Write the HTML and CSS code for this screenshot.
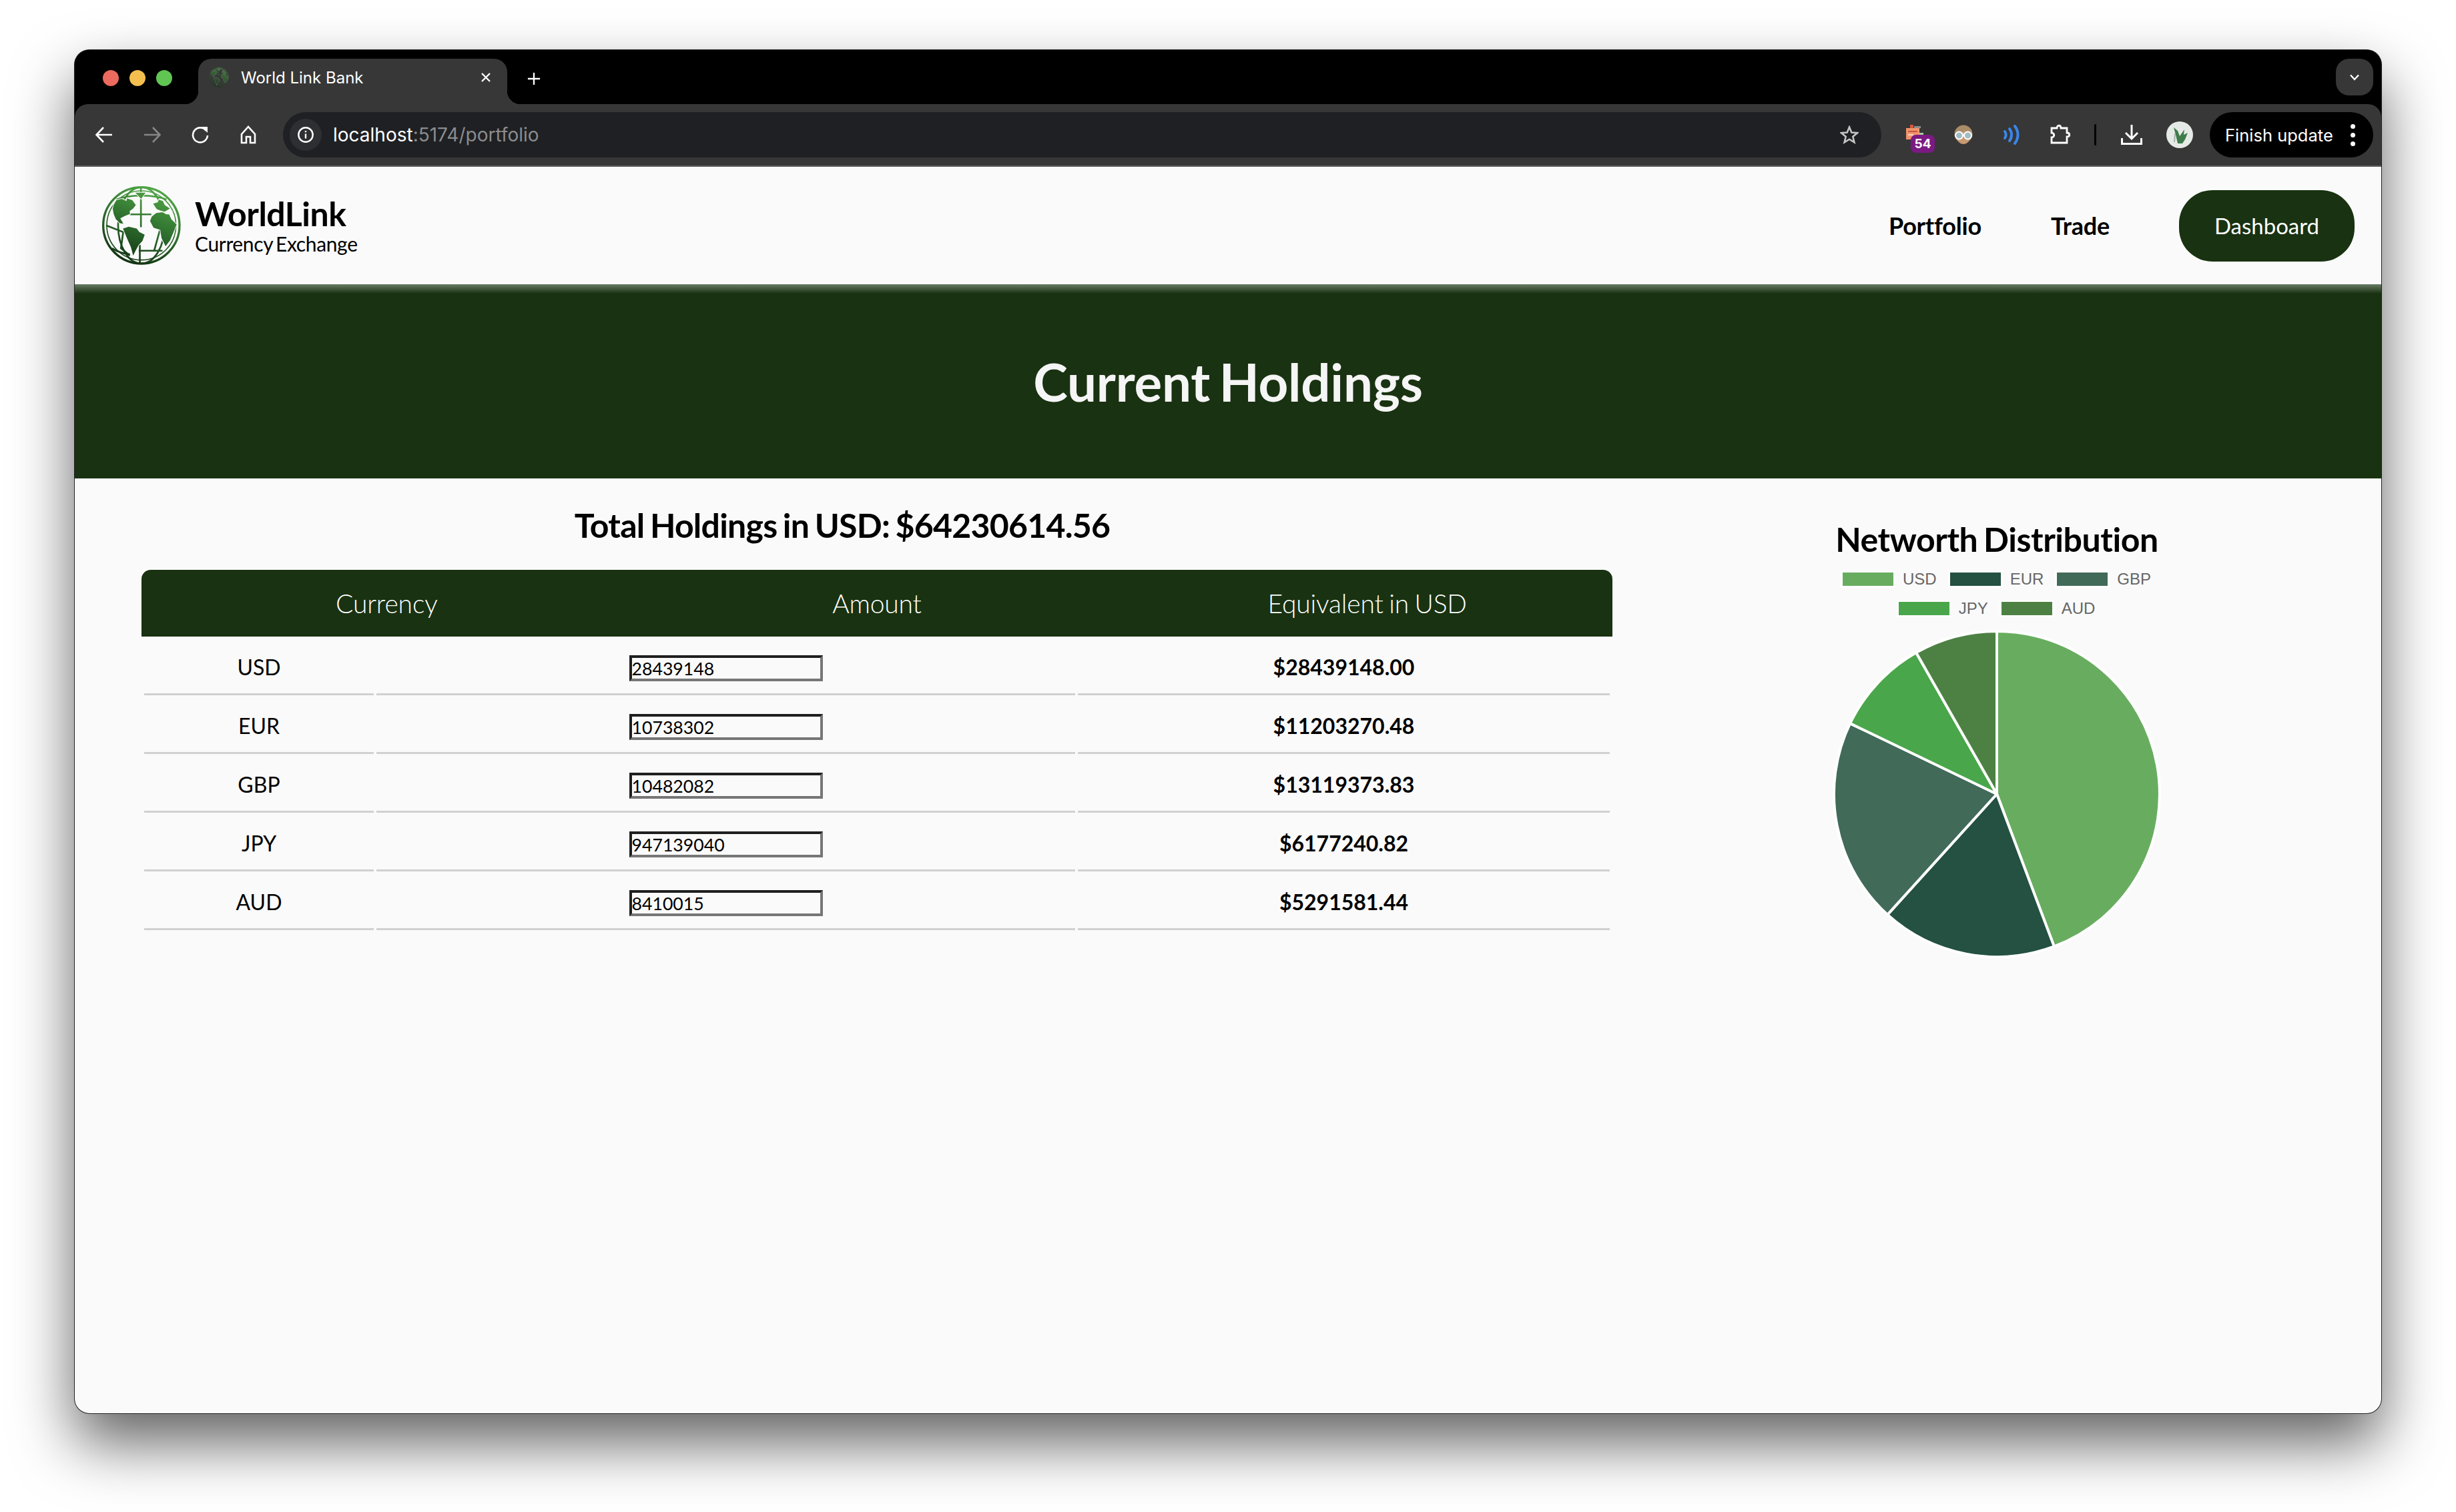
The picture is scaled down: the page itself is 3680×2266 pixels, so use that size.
FILE: index.html
```html
<!DOCTYPE html>
<html lang="en">
<head>
  <meta charset="UTF-8" />
  <title>World Link Bank</title>
  <link rel="stylesheet" href="styles.css">
</head>
<body>

  <svg class="defs" width="0" height="0">
    <defs>
      <linearGradient id="globe-fill" gradientUnits="userSpaceOnUse" x1="300" y1="70" x2="170" y2="400">
        <stop offset="0" stop-color="#52a848" />
        <stop offset="0.55" stop-color="#2b6a2c" />
        <stop offset="1" stop-color="#123412" />
      </linearGradient>
      <symbol id="globe" viewBox="40 55 355 355">
        <g fill="none" stroke="url(#globe-fill)" stroke-width="8">
          <circle cx="217" cy="232" r="172" stroke-width="10" />
          <circle cx="217" cy="232" r="156" stroke-width="5" />
          <ellipse cx="217" cy="232" rx="105" ry="172" />
          <path d="M215 60V240M210 320V404" />
          <path d="M165 182H262" />
          <path d="M205 346H312" />
          <path d="M58 232L135 262L125 335L165 368" />
          <path d="M300 255L275 345" />
          <path d="M105 115C160 92 275 92 330 115" />
          <path d="M85 335C110 352 130 358 165 362" />
        </g>
        <g fill="url(#globe-fill)" stroke="#fafafa" stroke-width="6" paint-order="stroke">
          <path d="M92 140L104 118L128 112L150 122L152 110L176 118L192 140L180 156L164 168L166 180L142 190L122 200L136 224L120 222L102 204L92 180L88 158Z" />
          <path d="M134 246L160 238L196 246L208 262L232 274L222 302L204 322L192 344L180 368L170 330L152 290Z" />
          <path d="M256 212L264 192L284 176L312 172L330 182L342 182L352 204L376 228L362 262L346 300L326 326L308 290L302 252L272 242Z" />
          <path d="M270 134L290 128L296 116L314 122L322 140L346 156L322 170L300 164L286 158Z" />
          <path d="M190 84H236L216 112Z" />
        </g>
      </symbol>
    </defs>
  </svg>

  <div class="window">

    <div class="tabstrip">
      <div class="lights">
        <span class="light red"></span>
        <span class="light yellow"></span>
        <span class="light green"></span>
      </div>
      <div class="tab">
        <svg class="favicon"><use href="#globe" /></svg>
        <span class="tab-title">World Link Bank</span>
        <svg class="tab-close" viewBox="0 0 16 16"><path d="M2 2L14 14M14 2L2 14" /></svg>
      </div>
      <svg class="new-tab" viewBox="0 0 22 22"><path d="M11 1V21M1 11H21" /></svg>
      <div class="tab-search">
        <svg viewBox="0 0 16 10"><path d="M2 1.500L8 8L14 1.500" /></svg>
      </div>
    </div>

    <div class="toolbar">
      <div class="tool">
        <svg class="icon" viewBox="0 0 28 28"><path d="M26 14H3M13 3L2.500 14L13 25" /></svg>
      </div>
      <div class="tool dim">
        <svg class="icon" viewBox="0 0 28 28"><path d="M2 14H25M15 3L25.500 14L15 25" /></svg>
      </div>
      <div class="tool">
        <svg class="icon" viewBox="0 0 28 28"><path d="M23 8A11 11 0 1 0 25 15" /><path class="solid" d="M16 2L25 2V11Z" /></svg>
      </div>
      <div class="tool">
        <svg class="icon" viewBox="0 0 28 28"><path d="M4 13L14 2L24 13V26H17V17H11V26H4Z" /></svg>
      </div>

      <div class="address">
        <div class="site-info">
          <svg class="icon" viewBox="0 0 28 28"><circle cx="14" cy="14" r="11.500" /><path d="M14 12.500V20" /><path d="M14 7.500V10" /></svg>
        </div>
        <span class="url">localhost<span class="url-rest">:5174/portfolio</span></span>
        <svg class="icon star" viewBox="0 0 28 28"><path d="M14 2.500L17.300 10.600L26 11.200L19.300 16.800L21.400 25.300L14 20.700L6.600 25.300L8.700 16.800L2 11.200L10.700 10.600Z" /></svg>
      </div>

      <div class="tool ext">
        <svg class="ext-tabs" viewBox="0 0 26 26">
          <rect x="6" y="0" width="5" height="5" fill="#d9583a" />
          <rect x="12" y="2" width="10" height="3" fill="#8d8d8d" />
          <rect x="0" y="5" width="20" height="17" fill="#f0936c" />
          <rect x="3" y="9" width="14" height="2" fill="#c9573a" />
          <rect x="3" y="14" width="8" height="2" fill="#fbd3bf" />
          <rect x="20" y="12" width="6" height="3" fill="#a7c9a0" />
          <rect x="20" y="17" width="6" height="3" fill="#8d8d8d" />
        </svg>
        <span class="ext-badge">54</span>
      </div>
      <div class="tool">
        <svg class="ext-face" viewBox="0 0 30 30">
          <circle cx="15" cy="14" r="13.500" fill="#a98c68" />
          <path d="M5 17C5 25 10 29 15 29C20 29 25 25 25 17C20 14 17 11 16 8C14 12 10 15 5 17Z" fill="#c79a72" />
          <circle cx="8.500" cy="16" r="5.500" fill="#9fbdc4" stroke="#fff" stroke-width="2" />
          <circle cx="21.500" cy="16" r="5.500" fill="#9fbdc4" stroke="#fff" stroke-width="2" />
        </svg>
      </div>
      <div class="tool">
        <svg class="ext-wave" viewBox="0 0 26 30">
          <path d="M3 10C5 13 5 17 3 20" />
          <path d="M10 6C14 11 14 19 10 24" />
          <path d="M18 2C24 10 24 20 18 28" />
        </svg>
      </div>
      <div class="tool">
        <svg class="puzzle" viewBox="0 0 32 32"><path d="M3 6H11C11 1 17 1 17 6H26V13C31 13 31 19 26 19V28H3V20C8 20 8 13 3 13Z" /></svg>
      </div>
      <span class="tool-divider"></span>
      <div class="tool">
        <svg class="download" viewBox="0 0 32 32"><path d="M16 1V21M7 13L16 22L25 13" /><path d="M1.500 21V29.500H30.500V21" /></svg>
      </div>
      <div class="tool">
        <svg class="avatar" viewBox="0 0 40 40">
          <circle cx="20" cy="20" r="20" fill="#e6eae6" />
          <path d="M11 9L17 14L20 22L27 12L26 20L32 17L28 27L24 33L17 33L14 20Z" fill="#3f7c4a" />
          <path d="M13 18L12 31" stroke="#a9b3a9" stroke-width="2" fill="none" />
        </svg>
      </div>
      <div class="update-pill">
        <span>Finish update</span>
        <span class="dots"><i></i><i></i><i></i></span>
      </div>
    </div>

    <div class="page">
      <header class="site-header">
        <div class="brand">
          <svg class="logo"><use href="#globe" /></svg>
          <div>
            <div class="brand-name">WorldLink</div>
            <div class="brand-sub">Currency Exchange</div>
          </div>
        </div>
        <nav class="site-nav">
          <a>Portfolio</a>
          <a>Trade</a>
          <a class="nav-button">Dashboard</a>
        </nav>
      </header>

      <section class="hero">
        <h1>Current Holdings</h1>
      </section>

      <main class="content">
        <section class="holdings">
          <h2>Total Holdings in USD: $64230614.56</h2>
          <div class="table-head">
            <span>Currency</span>
            <span>Amount</span>
            <span>Equivalent in USD</span>
          </div>
          <table class="holdings-table">
            <colgroup>
              <col class="col-currency">
              <col class="col-amount">
              <col class="col-usd">
            </colgroup>
            <tbody>
              <tr>
                <td>USD</td>
                <td><input class="amount" type="text" value="28439148"></td>
                <td class="usd">$28439148.00</td>
              </tr>
              <tr>
                <td>EUR</td>
                <td><input class="amount" type="text" value="10738302"></td>
                <td class="usd">$11203270.48</td>
              </tr>
              <tr>
                <td>GBP</td>
                <td><input class="amount" type="text" value="10482082"></td>
                <td class="usd">$13119373.83</td>
              </tr>
              <tr>
                <td>JPY</td>
                <td><input class="amount" type="text" value="947139040"></td>
                <td class="usd">$6177240.82</td>
              </tr>
              <tr>
                <td>AUD</td>
                <td><input class="amount" type="text" value="8410015"></td>
                <td class="usd">$5291581.44</td>
              </tr>
            </tbody>
          </table>
        </section>

        <aside class="networth">
          <h3>Networth Distribution</h3>
          <div class="legend">
            <div class="legend-row">
              <span class="legend-item"><i class="swatch c-usd"></i>USD</span>
              <span class="legend-item"><i class="swatch c-eur"></i>EUR</span>
              <span class="legend-item"><i class="swatch c-gbp"></i>GBP</span>
            </div>
            <div class="legend-row">
              <span class="legend-item"><i class="swatch c-jpy"></i>JPY</span>
              <span class="legend-item"><i class="swatch c-aud"></i>AUD</span>
            </div>
          </div>
          <svg class="pie" viewBox="0 0 488 488">
            <path class="f-usd" d="M244 244L244 0A244 244 0 0 1 329.800 472.400Z" />
            <path class="f-eur" d="M244 244L329.800 472.400A244 244 0 0 1 80.100 424.800Z" />
            <path class="f-gbp" d="M244 244L80.100 424.800A244 244 0 0 1 24.100 138.100Z" />
            <path class="f-jpy" d="M244 244L24.100 138.100A244 244 0 0 1 123.100 32.100Z" />
            <path class="f-aud" d="M244 244L123.100 32.100A244 244 0 0 1 244 0Z" />
          </svg>
        </aside>
      </main>
    </div>
  </div>

</body>
</html>
```

FILE: styles.css
```css
/* Desktop behind the browser window */
html, body {
  margin: 0;
  height: 100%;
}

body {
  background: #fff;
  padding: 75px 112px 148px;
  box-sizing: border-box;
  font-family: Lato, "Open Sans", sans-serif;
  overflow: hidden;
}

.defs {
  position: absolute;
}

.window {
  height: 100%;
  display: flex;
  flex-direction: column;
  background: #000;
  border-radius: 22px;
  overflow: hidden;
  box-shadow: 0 0 0 1px #222, 0 44px 90px rgba(0, 0, 0, 0.62);
}

/* Browser tab strip */
.tabstrip {
  height: 81px;
  flex: none;
  display: flex;
  align-items: flex-end;
  background: #000;
}

.lights {
  display: flex;
  gap: 16px;
  margin: 0 39px 27px 42px;
}

.light {
  width: 24px;
  height: 24px;
  border-radius: 50%;
}

.red { background: #ec6a5e; }
.yellow { background: #f4bf4f; }
.green { background: #61c554; }

.tab {
  position: relative;
  width: 463px;
  height: 68px;
  box-sizing: border-box;
  padding: 0 24px 12px 16px;
  display: flex;
  align-items: center;
  background: #373737;
  border-radius: 20px 20px 0 0;
  color: #fff;
  font-family: Inter, sans-serif;
  font-size: 24px;
}

.tab::before,
.tab::after {
  content: "";
  position: absolute;
  bottom: 0;
  width: 20px;
  height: 20px;
}

.tab::before {
  left: -20px;
  background: radial-gradient(circle at 0 0, #000 20px, #373737 20.5px);
}

.tab::after {
  right: -20px;
  background: radial-gradient(circle at 100% 0, #000 20px, #373737 20.5px);
}

.favicon {
  width: 30px;
  height: 32px;
  margin-right: 18px;
  opacity: 0.6;
}

.tab-title {
  flex: 1;
}

.tab-close {
  width: 16px;
  height: 16px;
  fill: none;
  stroke: #fff;
  stroke-width: 2.4;
}

.new-tab {
  width: 20px;
  height: 20px;
  margin: 0 0 28px 30px;
  fill: none;
  stroke: #fff;
  stroke-width: 2.6;
}

.tab-search {
  width: 56px;
  height: 55px;
  margin: 0 12px 13px auto;
  display: flex;
  align-items: center;
  justify-content: center;
  background: #373737;
  border-radius: 20px;
}

.tab-search svg {
  width: 16px;
  height: 10px;
  fill: none;
  stroke: #fff;
  stroke-width: 2.4;
}

/* Browser toolbar */
.toolbar {
  height: 94px;
  flex: none;
  box-sizing: border-box;
  padding: 0 12px 0 8px;
  display: flex;
  align-items: center;
  background: #373737;
  border-bottom: 2px solid #5f5f5f;
  border-radius: 20px 20px 0 0;
}

.tool {
  position: relative;
  width: 72px;
  height: 72px;
  flex: none;
  display: flex;
  align-items: center;
  justify-content: center;
}

.icon {
  width: 28px;
  height: 28px;
  fill: none;
  stroke: #fff;
  stroke-width: 2.6;
}

.icon .solid {
  fill: #fff;
  stroke: none;
}

.dim .icon {
  stroke: #868686;
}

.address {
  flex: 1;
  height: 68px;
  margin: 0 13px 0 16px;
  padding: 0 34px 0 10px;
  display: flex;
  align-items: center;
  background: #1f2023;
  border-radius: 34px;
}

.site-info {
  width: 48px;
  height: 48px;
  margin-right: 17px;
  display: flex;
  align-items: center;
  justify-content: center;
  background: #2e2f32;
  border-radius: 50%;
}

.site-info .icon {
  width: 26px;
  height: 26px;
}

.url {
  flex: 1;
  color: #fff;
  font-family: Inter, sans-serif;
  font-size: 28px;
}

.url-rest {
  color: #8b8c8e;
}

.star {
  stroke: #c4c4c4;
}

.ext-tabs {
  position: absolute;
  left: 24px;
  top: 21px;
  width: 26px;
  height: 26px;
}

.ext-badge {
  position: absolute;
  left: 31px;
  top: 36px;
  width: 36px;
  height: 27px;
  display: flex;
  align-items: center;
  justify-content: center;
  background: #7b1a82;
  border-radius: 8px;
  color: #fff;
  font-family: Inter, sans-serif;
  font-size: 19px;
  font-weight: 700;
}

.ext-face {
  width: 30px;
  height: 30px;
  margin-left: 4px;
}

.ext-wave {
  width: 26px;
  height: 30px;
  margin-left: 4px;
  fill: none;
  stroke: #3a86ea;
  stroke-width: 4;
  stroke-linecap: round;
}

.puzzle {
  width: 32px;
  height: 32px;
  margin-left: 6px;
  fill: none;
  stroke: #fff;
  stroke-width: 2.8;
}

.download {
  width: 32px;
  height: 32px;
  fill: none;
  stroke: #fff;
  stroke-width: 3;
}

.tool-divider {
  width: 3px;
  height: 32px;
  margin: 0 17px 0 18px;
  flex: none;
  background: #000;
  border-radius: 2px;
}

.avatar {
  width: 40px;
  height: 40px;
}

.update-pill {
  width: 245px;
  height: 68px;
  margin-left: 9px;
  box-sizing: border-box;
  padding: 0 27px 0 23px;
  display: flex;
  align-items: center;
  justify-content: space-between;
  flex: none;
  background: #000;
  border-radius: 34px;
  color: #fff;
  font-family: Inter, sans-serif;
  font-size: 25.5px;
}

.dots {
  display: flex;
  flex-direction: column;
  gap: 6px;
}

.dots i {
  width: 7px;
  height: 7px;
  background: #fff;
  border-radius: 50%;
}

/* The page itself */
.page {
  flex: 1;
  display: flex;
  flex-direction: column;
  background: #fafafa;
}

.site-header {
  height: 176px;
  flex: none;
  box-sizing: border-box;
  padding: 0 40px 0 41px;
  display: flex;
  align-items: center;
  justify-content: space-between;
}

.brand {
  display: flex;
  align-items: center;
  gap: 21px;
}

.logo {
  width: 118px;
  height: 118px;
}

.brand-name {
  font-size: 50px;
  font-weight: 700;
  line-height: 54px;
  letter-spacing: -0.5px;
  color: #000;
}

.brand-sub {
  font-size: 30px;
  line-height: 36px;
  letter-spacing: -0.35px;
  word-spacing: -3px;
  color: #000;
}

.site-nav {
  display: flex;
  align-items: center;
  gap: 104px;
}

.site-nav a {
  font-size: 36px;
  font-weight: 700;
  letter-spacing: -0.2px;
  color: #000;
}

.site-nav .nav-button {
  width: 263px;
  height: 107px;
  display: flex;
  align-items: center;
  justify-content: center;
  background: #193211;
  border-radius: 50px;
  color: #fff;
  font-weight: 400;
  font-size: 33px;
  letter-spacing: 0;
}

.hero {
  height: 291px;
  flex: none;
  display: flex;
  justify-content: center;
  align-items: center;
  background: linear-gradient(#6a7b66 0, #193211 14px);
}

.hero h1 {
  margin: 0;
  font-size: 78px;
  font-weight: 700;
  letter-spacing: -0.2px;
  word-spacing: -5px;
  color: #f5f5f5;
}

.content {
  flex: 1;
  display: flex;
  padding-left: 100px;
}

.holdings {
  width: 2204px;
  flex: none;
}

.holdings h2 {
  margin: 0;
  padding: 40px 104px 37px 0;
  font-size: 50px;
  line-height: 60px;
  font-weight: 700;
  letter-spacing: -0.75px;
  word-spacing: -3px;
  text-align: center;
  color: #000;
}

.table-head {
  height: 100px;
  display: grid;
  grid-template-columns: repeat(3, 1fr);
  align-items: center;
  background: #193211;
  border-radius: 14px 14px 0 0;
  color: #fff;
  font-size: 39px;
  font-weight: 300;
  letter-spacing: -0.15px;
  word-spacing: -2px;
  text-align: center;
}

.holdings-table {
  width: 100%;
  table-layout: fixed;
  border-collapse: separate;
  border-spacing: 4px;
  font-size: 32px;
  color: #000;
}

.col-currency { width: 344px; }
.col-amount { width: 1047px; }
.col-usd { width: 797px; }

.holdings-table td {
  height: 84px;
  box-sizing: border-box;
  padding: 2px 0 0;
  border-bottom: 3px solid #d0d0d0;
  text-align: center;
}

.holdings-table .usd {
  font-weight: 700;
}

.amount {
  width: 290px;
  height: 39px;
  box-sizing: border-box;
  padding: 0;
  display: inline-block;
  vertical-align: middle;
  background: #fafafa;
  border-style: solid;
  border-width: 4px;
  border-color: #1f1f1f #767676 #767676 #1f1f1f;
  font-family: Lato, sans-serif;
  font-size: 26.67px;
  color: #000;
}

/* Pie chart column */
.networth {
  width: 488px;
  margin-left: 332px;
  flex: none;
  text-align: center;
}

.networth h3 {
  margin: 0 -20px;
  padding-top: 61px;
  font-size: 50px;
  line-height: 60px;
  font-weight: 700;
  letter-spacing: -0.45px;
  word-spacing: -3px;
  color: #000;
}

.legend {
  margin: 20px -10px 0;
  display: flex;
  flex-direction: column;
  gap: 24px;
}

.legend-row {
  height: 20px;
  display: flex;
  justify-content: center;
  gap: 20px;
}

.legend-item {
  display: flex;
  align-items: center;
  gap: 14px;
  font-family: "Liberation Sans", Arial, sans-serif;
  font-size: 24px;
  color: #666;
}

.swatch {
  width: 76px;
  height: 20px;
  box-shadow: 0 0 0 3px #fff;
}

.c-usd { background: #68ad5f; }
.c-eur { background: #245141; }
.c-gbp { background: #416a59; }
.c-jpy { background: #4aa64a; }
.c-aud { background: #4d8143; }

.pie {
  display: block;
  width: 488px;
  height: 488px;
  margin-top: 24px;
  overflow: visible;
}

.pie path {
  stroke: #fff;
  stroke-width: 4;
  stroke-linejoin: bevel;
}

.f-usd { fill: #68ad5f; }
.f-eur { fill: #245141; }
.f-gbp { fill: #416a59; }
.f-jpy { fill: #4aa64a; }
.f-aud { fill: #4d8143; }
```
